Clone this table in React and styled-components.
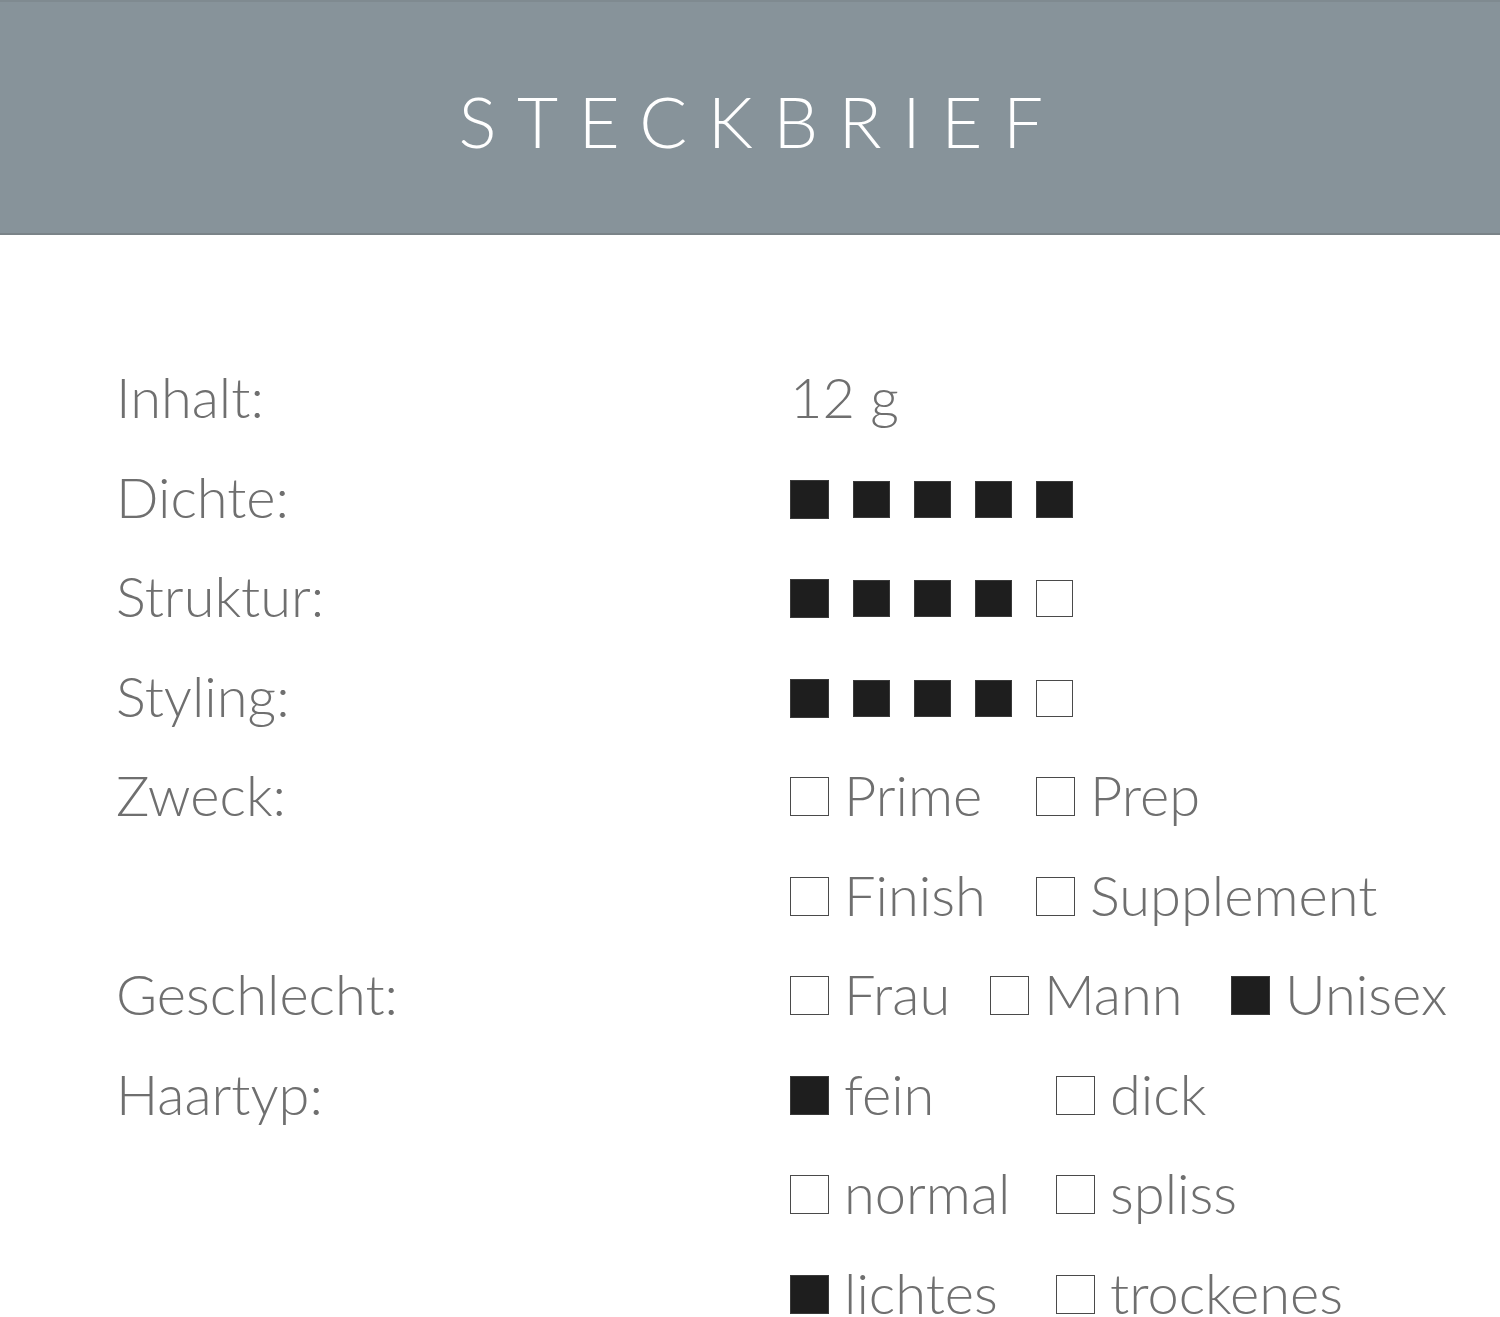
import React from 'react';
import styled, { createGlobalStyle } from 'styled-components';

const ROW = 99.5;

const GlobalStyle = createGlobalStyle`
  html, body {
    margin: 0;
    padding: 0;
    background: #ffffff;
  }
  body {
    font-family: 'Lato', 'Open Sans', sans-serif;
    -webkit-font-smoothing: antialiased;
  }
`;

const Page = styled.div`
  width: 1500px;
  height: 1317px;
  background: #ffffff;
  overflow: hidden;
`;

const Header = styled.header`
  height: 235px;
  box-sizing: border-box;
  background: #87939a;
  border-top: 2px solid #7f8a90;
  border-bottom: 2px solid #7a8388;
  display: flex;
  align-items: center;
  justify-content: center;
`;

const Title = styled.h1`
  margin: 0 0 0 22px;
  color: #ffffff;
  font-family: 'Lato', sans-serif;
  font-weight: 300;
  font-size: 71px;
  line-height: 1;
  letter-spacing: 20.5px;
  padding-top: 5px;
`;

const Sheet = styled.section`
  display: grid;
  grid-template-columns: 674px 1fr;
  padding: 112px 0 0 116px;
  color: #6f6f6f;
  font-family: 'Lato', sans-serif;
  font-weight: 300;
  font-size: 56px;
`;

const Label = styled.div`
  line-height: ${ROW}px;
  height: ${ROW}px;
  white-space: nowrap;
`;

const Values = styled.div`
  display: flex;
  flex-direction: column;
`;

const Line = styled.div`
  line-height: ${ROW}px;
  height: ${ROW}px;
  white-space: nowrap;
`;

const Dots = styled.div`
  height: ${ROW}px;
  box-sizing: border-box;
  padding-top: 6px;
  display: flex;
  align-items: center;
  gap: 24px;
`;

const Square = styled.span`
  width: 37px;
  height: 37px;
  box-sizing: border-box;
  background: ${(p) => (p.$on ? '#1e1e1e' : '#ffffff')};
  border: 1.5px solid ${(p) => (p.$on ? '#3a3a3a' : '#4a4a4a')};

  &:first-child {
    width: 39px;
    height: 39px;
  }
`;

const CheckGrid = styled.div`
  display: grid;
  grid-template-columns: ${(p) => p.$cols};
  grid-auto-rows: ${ROW}px;
`;

const Check = styled.div`
  display: flex;
  align-items: baseline;
  gap: 15px;
  line-height: ${ROW}px;
  white-space: nowrap;
`;

const Box = styled.span`
  flex: none;
  width: 39px;
  height: 39px;
  box-sizing: border-box;
  background: ${(p) => (p.$on ? '#1e1e1e' : '#ffffff')};
  border: 1.5px solid ${(p) => (p.$on ? '#3a3a3a' : '#4a4a4a')};
`;

const Rating = ({ value }) => (
  <Dots>
    {[0, 1, 2, 3, 4].map((i) => (
      <Square key={i} $on={i < value} />
    ))}
  </Dots>
);

const Options = ({ cols, items }) => (
  <CheckGrid $cols={cols}>
    {items.map(([text, on]) => (
      <Check key={text}>
        <Box $on={on} />
        {text}
      </Check>
    ))}
  </CheckGrid>
);

export default function App() {
  return (
    <Page>
      <GlobalStyle />
      <Header>
        <Title>STECKBRIEF</Title>
      </Header>
      <Sheet>
        <Label>Inhalt:</Label>
        <Values>
          <Line>12 g</Line>
        </Values>

        <Label>Dichte:</Label>
        <Values>
          <Rating value={5} />
        </Values>

        <Label>Struktur:</Label>
        <Values>
          <Rating value={4} />
        </Values>

        <Label>Styling:</Label>
        <Values>
          <Rating value={4} />
        </Values>

        <Label>Zweck:</Label>
        <Values>
          <Options
            cols="246px auto"
            items={[
              ['Prime', false],
              ['Prep', false],
              ['Finish', false],
              ['Supplement', false],
            ]}
          />
        </Values>

        <Label>Geschlecht:</Label>
        <Values>
          <Options
            cols="200px 241px auto"
            items={[
              ['Frau', false],
              ['Mann', false],
              ['Unisex', true],
            ]}
          />
        </Values>

        <Label>Haartyp:</Label>
        <Values>
          <Options
            cols="266px auto"
            items={[
              ['fein', true],
              ['dick', false],
              ['normal', false],
              ['spliss', false],
              ['lichtes', true],
              ['trockenes', false],
            ]}
          />
        </Values>
      </Sheet>
    </Page>
  );
}
